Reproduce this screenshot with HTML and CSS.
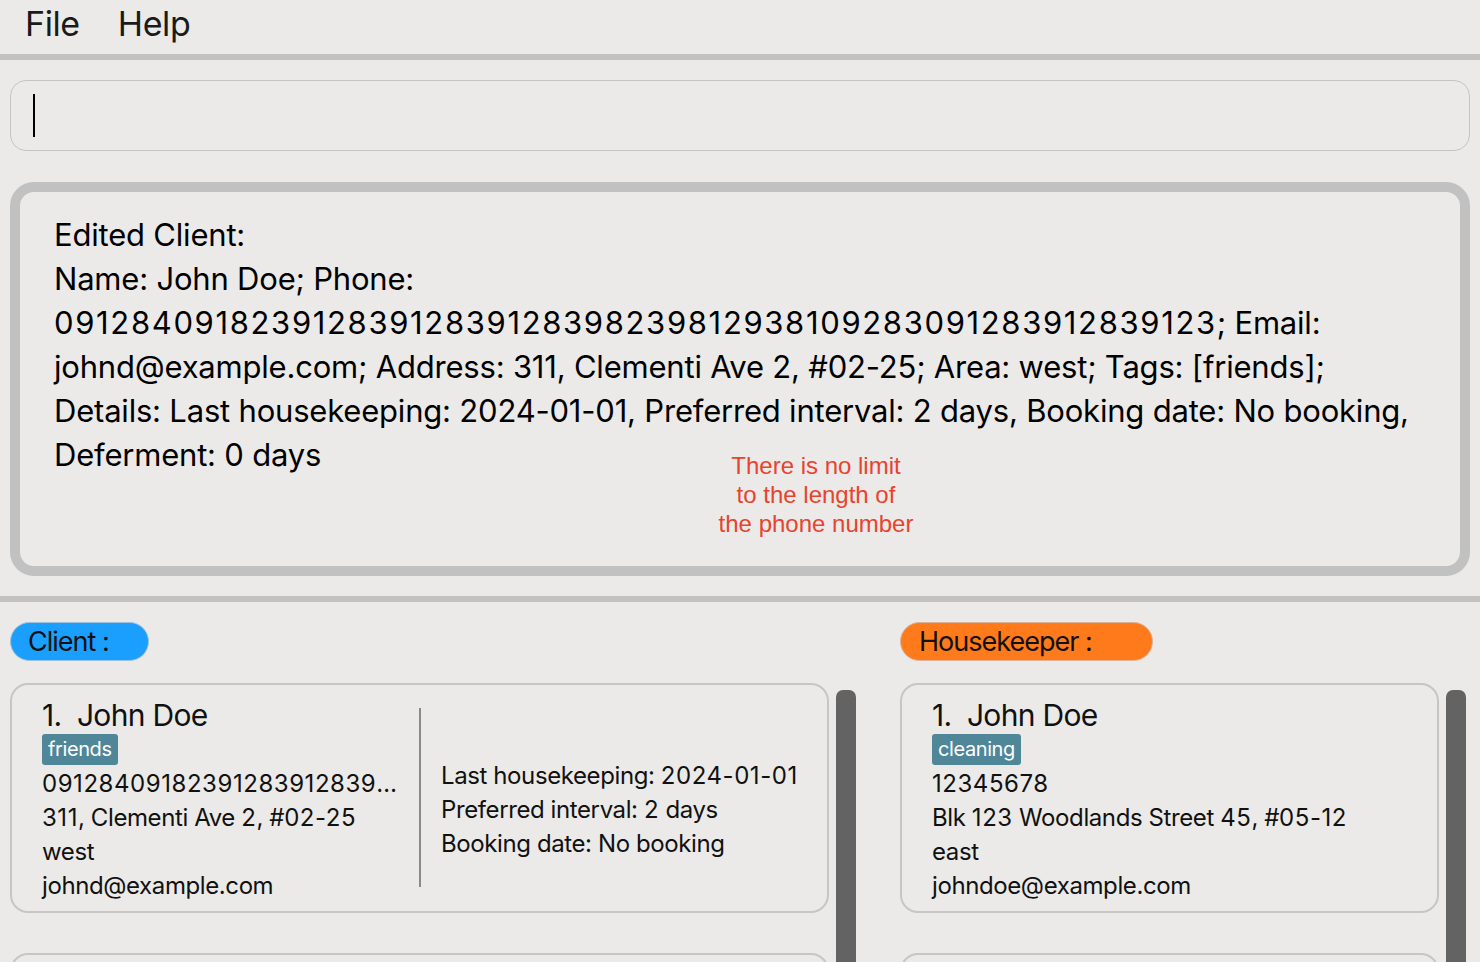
FILE: index.html
```html
<!DOCTYPE html>
<html>
<head>
<meta charset="utf-8">
<link rel="stylesheet" href="styles.css">
</head>
<body>
<div class="menubar">
  <span class="menu-item">File</span>
  <span class="menu-item">Help</span>
</div>
<div class="sep"></div>
<div class="command"><span class="caret"></span></div>
<div class="result">
  <div class="result-text">Edited Client:<br>Name: John Doe; Phone:<br><span class="digits">09128409182391283912839128398239812938109283091283912839123</span>; Email:<br>johnd@example.com; Address: 311, Clementi Ave 2, #02-25; Area: west; Tags: [friends];<br>Details: Last housekeeping: 2024-01-01, Preferred interval: 2 days, Booking date: No booking,<br>Deferment: 0 days</div>
  <div class="note">There is no limit<br>to the length of<br>the phone number</div>
</div>
<div class="sep sep-lower"></div>
<div class="lists">
  <div class="col col-client">
    <div class="pill pill-client">Client :</div>
    <div class="list-body">
      <div class="cards">
        <div class="card">
          <div class="card-main">
            <div class="name">1.&nbsp;&nbsp;John Doe</div>
            <div class="tags"><span class="tag">friends</span></div>
            <div class="line ellipsis num">09128409182391283912839128398239812938109283091283912839123</div>
            <div class="line"><span class="num">311</span>, Clementi Ave <span class="num">2</span>, #<span class="num">02-25</span></div>
            <div class="line">west</div>
            <div class="line">johnd@example.com</div>
          </div>
          <div class="divider"></div>
          <div class="card-details">
            <div class="line">Last housekeeping: <span class="num">2024-01-01</span></div>
            <div class="line">Preferred interval: <span class="num">2</span> days</div>
            <div class="line">Booking date: No booking</div>
          </div>
        </div>
        <div class="card"></div>
      </div>
      <div class="scrollbar"></div>
    </div>
  </div>
  <div class="col col-hk">
    <div class="pill pill-hk">Housekeeper :</div>
    <div class="list-body">
      <div class="cards">
        <div class="card">
          <div class="card-main">
            <div class="name">1.&nbsp;&nbsp;John Doe</div>
            <div class="tags"><span class="tag">cleaning</span></div>
            <div class="line num">12345678</div>
            <div class="line">Blk <span class="num">123</span> Woodlands Street <span class="num">45</span>, #<span class="num">05-12</span></div>
            <div class="line">east</div>
            <div class="line">johndoe@example.com</div>
          </div>
        </div>
        <div class="card"></div>
      </div>
      <div class="scrollbar"></div>
    </div>
  </div>
</div>
</body>
</html>
```
FILE: styles.css
```css
html, body {
  margin: 0;
  padding: 0;
  height: 962px;
  overflow: hidden;
}
body {
  background: #ebeae8;
  font-family: Inter, "Noto Sans", sans-serif;
  color: #1a1a1a;
}
.menubar {
  height: 54px;
  display: flex;
  align-items: center;
  padding-left: 25px;
  gap: 38px;
  font-size: 34px;
  letter-spacing: -0.4px;
}
.menu-item {
  position: relative;
  top: -4px;
}
.sep {
  height: 6px;
  background: #c1c1c1;
}
.command {
  margin: 20px 10px 0 10px;
  height: 69px;
  border: 1px solid #c4c4c4;
  border-radius: 16px;
  display: flex;
  align-items: center;
  padding-left: 22px;
}
.caret {
  width: 2px;
  height: 43px;
  background: #000;
}
.result {
  position: relative;
  margin: 31px 10px 0 10px;
  border: 10px solid #c1c1c1;
  border-radius: 24px;
  padding: 21px 0 0 34px;
  height: 353px;
}
.result-text {
  font-size: 31px;
  line-height: 44px;
  color: #000;
  letter-spacing: -0.2px;
  white-space: nowrap;
}
.digits {
  letter-spacing: 1.65px;
}
.note {
  position: absolute;
  left: 676px;
  top: 259px;
  width: 240px;
  text-align: center;
  font-family: "Liberation Sans", Arial, sans-serif;
  font-size: 24px;
  line-height: 29px;
  color: #e8432d;
}
.sep-lower {
  margin-top: 20px;
}
.lists {
  display: flex;
  gap: 44px;
  padding-left: 10px;
}
.col-client { width: 846px; }
.col-hk { width: 566px; }
.pill {
  margin-top: 20px;
  height: 37px;
  border-radius: 20px;
  display: flex;
  align-items: center;
  font-size: 27px;
  letter-spacing: -1px;
  color: #111;
}
.pill-client {
  width: 120px;
  padding-left: 17px;
  background: #1a9fff;
  border: 1px solid #9cc0de;
}
.pill-hk {
  width: 233px;
  padding-left: 18px;
  background: #ff7a1a;
  border: 1px solid #d9b49b;
}
.list-body {
  margin-top: 22px;
  display: flex;
  gap: 7px;
}
.cards {
  display: flex;
  flex-direction: column;
  gap: 40px;
}
.col-client .cards { flex: 0 0 819px; }
.col-hk .cards { flex: 0 0 539px; }
.card {
  height: 226px;
  border: 2px solid #c6c6c6;
  border-radius: 18px;
  display: flex;
  align-items: stretch;
}
.card-main {
  padding: 13px 0 0 30px;
  width: 358px;
  min-width: 0;
}
.name {
  font-size: 30px;
  line-height: 34px;
  letter-spacing: -0.7px;
  color: #111;
}
.tags {
  margin: 2px 0 2px 0;
  height: 31px;
  display: flex;
}
.tag {
  background: #4f8799;
  color: #fff;
  font-size: 20px;
  line-height: 31px;
  padding: 0 6px;
  border-radius: 3px;
  letter-spacing: -0.4px;
}
.line {
  font-size: 24px;
  line-height: 34px;
  letter-spacing: -0.4px;
  color: #111;
  white-space: nowrap;
}
.num {
  letter-spacing: 0.55px;
}
.ellipsis {
  overflow: hidden;
  text-overflow: ellipsis;
}
.divider {
  flex: 0 0 2px;
  background: #8a8a8a;
  margin: 23px 0 24px 19px;
}
.card-details {
  padding: 74px 0 0 20px;
}
.scrollbar {
  margin-top: 7px;
  width: 20px;
  height: 300px;
  background: #636363;
  border-radius: 7px;
}
```
